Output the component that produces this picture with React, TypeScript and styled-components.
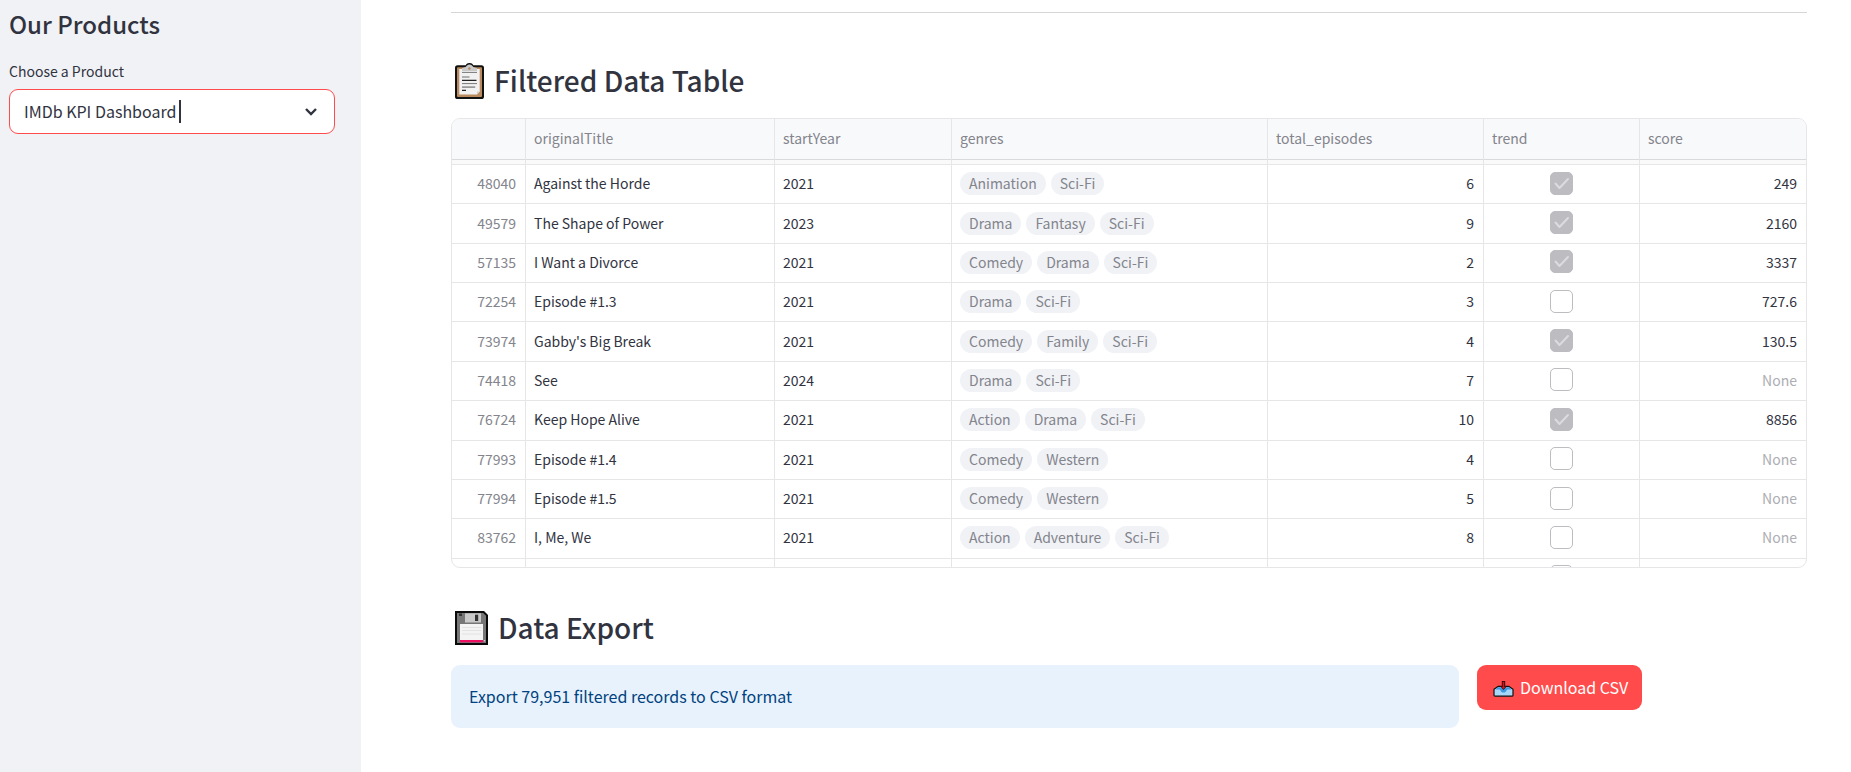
import React from "react";
import styled, { createGlobalStyle, css } from "styled-components";

const GlobalStyle = createGlobalStyle`
  *, *::before, *::after { box-sizing: border-box; }
  body {
    margin: 0;
    background: #ffffff;
    color: #31333f;
    font-family: "Noto Sans CJK SC", "Noto Sans", sans-serif;
    font-size: 16px;
    line-height: 28px;
  }
`;

const Layout = styled.div`
  display: flex;
  min-height: 100vh;
`;

const Sidebar = styled.aside`
  flex: 0 0 361px;
  padding: 7px 26px 24px 9px;
  background: #f0f2f6;
`;

const SidebarTitle = styled.h2`
  margin: 0 0 20px;
  font-size: 24px;
  line-height: 34px;
  font-weight: 500;
`;

const FieldLabel = styled.label`
  display: block;
  margin: 0 0 7px;
  font-size: 14px;
  line-height: 21px;
`;

const SelectBox = styled.div`
  position: relative;
`;

const Select = styled.select`
  appearance: none;
  display: block;
  width: 100%;
  height: 45px;
  padding: 0 48px 2px 14px;
  border: 1px solid #ff4b4b;
  border-radius: 9px;
  outline: none;
  background: #ffffff;
  color: inherit;
  font: inherit;
`;

const Caret = styled.span`
  position: absolute;
  top: 11px;
  left: 170px;
  width: 2px;
  height: 23px;
  background: #31333f;
`;

const Chevron = styled.svg`
  position: absolute;
  top: 18px;
  right: 18px;
  width: 12px;
  height: 9px;
  pointer-events: none;
`;

const Main = styled.main`
  flex: 1;
  min-width: 0;
  padding: 12px 44px 40px 90px;
`;

const Divider = styled.hr`
  height: 1px;
  margin: 0 0 8px;
  border: 0;
  background: #d6d6d9;
`;

const SectionTitle = styled.h2`
  display: flex;
  align-items: center;
  gap: 10px;
  margin: 0;
  padding: 39px 0 17px 4px;
  font-size: 28px;
  line-height: 41px;
  font-weight: 500;
`;

const TableFrame = styled.div`
  height: 450px;
  overflow: hidden;
  border: 1px solid #e6e6e9;
  border-radius: 9px;
`;

const Table = styled.table`
  width: 100%;
  height: 479px;
  table-layout: fixed;
  border-collapse: separate;
  border-spacing: 0;
  font-size: 14px;
  line-height: 23px;
`;

const cell = css`
  padding: 0 9px 1px 8px;
  border-right: 1px solid #e6e6e9;
  border-bottom: 1px solid #e6e6e9;
  white-space: nowrap;
  &:last-child { border-right: 0; }
`;

const HeadCell = styled.th`
  ${cell}
  height: 41px;
  border-bottom-color: #dadadd;
  background: #f8f9fb;
  color: #83848c;
  font-weight: 400;
  text-align: left;
`;

const SliverCell = styled.td`
  ${cell}
  height: 5px;
  background: #fafafa;
`;

const Cell = styled.td<{ $align?: "right" | "center"; $tone?: string }>`
  ${cell}
  color: ${(p) => p.$tone ?? "#31333f"};
  text-align: ${(p) => p.$align ?? "left"};
`;

const Tags = styled.div`
  display: flex;
  gap: 5px;
`;

const Tag = styled.span`
  padding: 0 9px;
  border-radius: 12px;
  background: #f0f2f6;
  color: #83848c;
`;

const Checkbox = styled.input`
  appearance: none;
  display: block;
  width: 23px;
  height: 23px;
  margin: 0;
  border: 1px solid #bcbcc1;
  border-radius: 5px;
  background: #ffffff;
`;

const CheckWrap = styled.span`
  position: relative;
  display: block;
  width: 23px;
  height: 23px;
  margin: 0 auto 1px;
  ${Checkbox}:checked { background: #bcbcc1; }
`;

const CheckMark = styled.svg`
  position: absolute;
  inset: 0;
  pointer-events: none;
`;

const ExportRow = styled.div`
  display: grid;
  grid-template-columns: 55fr 18fr;
  gap: 18px;
  align-items: start;
`;

const Notice = styled.div`
  padding: 17px 18px 18px;
  border-radius: 9px;
  background: #e8f2fc;
  color: #004280;
`;

const DownloadButton = styled.button`
  display: flex;
  align-items: center;
  justify-self: start;
  gap: 6px;
  height: 45px;
  padding: 0 14px 1px 16px;
  border: 0;
  border-radius: 9px;
  background: #ff4b4b;
  color: #ffffff;
  font: inherit;
`;

const ClipboardIcon = () => (
  <svg width="29" height="36" viewBox="0 0 29 36" aria-hidden="true">
    <circle cx="14.5" cy="4" r="4" fill="#111" />
    <rect x="0" y="2.3" width="29" height="33.7" rx="2.6" fill="#111" />
    <rect x="2" y="4.3" width="25" height="29.7" rx="1" fill="#b88a5d" />
    <path d="M4.3 6h20.4v22.4L22 31.4H4.3z" fill="#f1f1f1" />
    <path d="M22 31.4v-3h2.7z" fill="#cfcfcf" />
    <path d="M7 8V5.2L10.6 4l1.4-1.4a3.4 3.4 0 0 1 5 0L18.4 4 22 5.2V8z" fill="#c9c9c9" />
    <circle cx="14.4" cy="5.5" r="1.2" fill="#b88a5d" />
    <path d="M7 9.4h15" stroke="#777" strokeWidth="1" />
    <path d="M7 14h7.5M7 24.1h13.2" stroke="#999" strokeWidth="1.7" />
    <path d="M7 17.3h14.5M7 27.4h4" stroke="#222" strokeWidth="1.2" />
    <path d="M7 20.6h15" stroke="#777" strokeWidth="1" />
  </svg>
);

const FloppyIcon = () => (
  <svg width="33" height="34" viewBox="0 0 33 34" aria-hidden="true">
    <path d="M0 0h29l4 4v30H0z" fill="#0a0a0a" />
    <path d="M2 2h26.2L31 4.8V32H2z" fill="#777" />
    <path d="M4 2.5h3V5H4z" fill="#333" />
    <path d="M10 2.3h16V11.5H10z" fill="#c9c9c9" />
    <path d="M20 3.7h3.2V10H20z" fill="#333" />
    <path d="M5 13h23v16H5z" fill="#f4f4f4" />
    <path d="M7 16.5h19M7 19.5h19M7 23h19" stroke="#dedede" strokeWidth="0.8" />
    <path d="M5 29h23v2.3H5z" fill="#ee0f63" />
    <path d="M28.8 29h1.4v1.4h-1.4z" fill="#ccc" />
  </svg>
);

const InboxIcon = () => (
  <svg width="21" height="20" viewBox="0 0 21 20" aria-hidden="true">
    <path d="M1 12.2 5 9.4h11l4 2.8V18.200a1 1 0 0 1-1 1H2a1 1 0 0 1-1-1z" fill="#a9d7f7" stroke="#111" strokeWidth="1.200" strokeLinejoin="round" />
    <path d="M2.500 12.400 5.300 10.300h10.400l2.800 2.100H14c-.6 2-1.800 3.200-3.500 3.200S7.600 14.400 7 12.400z" fill="#3f97e0" />
    <path d="M8.800 4h3.400v5h1.900l-3.600 3.900L6.900 9h1.900z" fill="#3a0d10" />
    <path d="M9.800 5h1.400v5h1.200l-1.900 2.100L8.600 10h1.200z" fill="#d5131f" />
  </svg>
);

type Row = {
  id: number;
  title: string;
  year: number;
  genres: string[];
  episodes: number;
  trend: boolean;
  score: string;
};

const rows: Row[] = [
  { id: 48040, title: "Against the Horde", year: 2021, genres: ["Animation", "Sci-Fi"], episodes: 6, trend: true, score: "249" },
  { id: 49579, title: "The Shape of Power", year: 2023, genres: ["Drama", "Fantasy", "Sci-Fi"], episodes: 9, trend: true, score: "2160" },
  { id: 57135, title: "I Want a Divorce", year: 2021, genres: ["Comedy", "Drama", "Sci-Fi"], episodes: 2, trend: true, score: "3337" },
  { id: 72254, title: "Episode #1.3", year: 2021, genres: ["Drama", "Sci-Fi"], episodes: 3, trend: false, score: "727.6" },
  { id: 73974, title: "Gabby's Big Break", year: 2021, genres: ["Comedy", "Family", "Sci-Fi"], episodes: 4, trend: true, score: "130.5" },
  { id: 74418, title: "See", year: 2024, genres: ["Drama", "Sci-Fi"], episodes: 7, trend: false, score: "None" },
  { id: 76724, title: "Keep Hope Alive", year: 2021, genres: ["Action", "Drama", "Sci-Fi"], episodes: 10, trend: true, score: "8856" },
  { id: 77993, title: "Episode #1.4", year: 2021, genres: ["Comedy", "Western"], episodes: 4, trend: false, score: "None" },
  { id: 77994, title: "Episode #1.5", year: 2021, genres: ["Comedy", "Western"], episodes: 5, trend: false, score: "None" },
  { id: 83762, title: "I, Me, We", year: 2021, genres: ["Action", "Adventure", "Sci-Fi"], episodes: 8, trend: false, score: "None" },
];

const columns = [
  { name: "", width: 74 },
  { name: "originalTitle", width: 249 },
  { name: "startYear", width: 177 },
  { name: "genres", width: 316 },
  { name: "total_episodes", width: 216 },
  { name: "trend", width: 156 },
  { name: "score", width: 166 },
];

const TrendBox = ({ checked, label }: { checked: boolean; label: string }) => (
  <CheckWrap>
    <Checkbox type="checkbox" checked={checked} disabled aria-label={label} readOnly />
    {checked && (
      <CheckMark viewBox="0 0 23 23" fill="none" stroke="#dcdcdf" strokeWidth="2" strokeLinecap="round" strokeLinejoin="round">
        <path d="M5.5 11.5 9.5 16 18 7" />
      </CheckMark>
    )}
  </CheckWrap>
);

export default function App() {
  return (
    <>
      <GlobalStyle />
      <Layout>
        <Sidebar>
          <SidebarTitle>Our Products</SidebarTitle>
          <FieldLabel htmlFor="product">Choose a Product</FieldLabel>
          <SelectBox>
            <Select id="product" defaultValue="imdb">
              <option value="imdb">IMDb KPI Dashboard</option>
            </Select>
            <Caret />
            <Chevron viewBox="0 0 12 9" fill="none" stroke="#31333f" strokeWidth="2.4">
              <path d="M1 2l5 5 5-5" />
            </Chevron>
          </SelectBox>
        </Sidebar>
        <Main>
          <Divider />
          <SectionTitle>
            <ClipboardIcon />
            Filtered Data Table
          </SectionTitle>
          <TableFrame>
            <Table>
              <colgroup>
                {columns.map((c) => (
                  <col key={c.name} width={c.width} />
                ))}
              </colgroup>
              <thead>
                <tr>
                  {columns.map((c) => (
                    <HeadCell key={c.name}>{c.name}</HeadCell>
                  ))}
                </tr>
              </thead>
              <tbody>
                <tr>
                  {columns.map((c) => (
                    <SliverCell key={c.name} />
                  ))}
                </tr>
                {rows.map((r) => (
                  <tr key={r.id}>
                    <Cell $align="right" $tone="#83848c">{r.id}</Cell>
                    <Cell>{r.title}</Cell>
                    <Cell>{r.year}</Cell>
                    <Cell>
                      <Tags>
                        {r.genres.map((g) => (
                          <Tag key={g}>{g}</Tag>
                        ))}
                      </Tags>
                    </Cell>
                    <Cell $align="right">{r.episodes}</Cell>
                    <Cell><TrendBox checked={r.trend} label={`Trend for ${r.title}`} /></Cell>
                    <Cell $align="right" $tone={r.score === "None" ? "#adadb2" : undefined}>{r.score}</Cell>
                  </tr>
                ))}
                <tr>
                  {columns.map((c) => (
                    <Cell key={c.name}>
                      {c.name === "trend" && <TrendBox checked={false} label="Trend" />}
                    </Cell>
                  ))}
                </tr>
              </tbody>
            </Table>
          </TableFrame>
          <SectionTitle>
            <FloppyIcon />
            Data Export
          </SectionTitle>
          <ExportRow>
            <Notice>Export 79,951 filtered records to CSV format</Notice>
            <DownloadButton type="button">
              <InboxIcon />
              Download CSV
            </DownloadButton>
          </ExportRow>
        </Main>
      </Layout>
    </>
  );
}
